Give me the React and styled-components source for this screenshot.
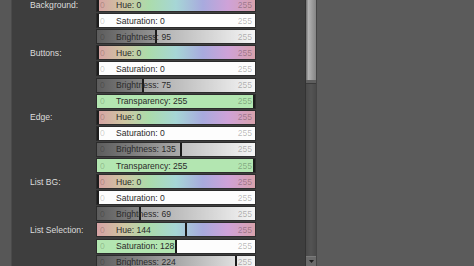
import React from "react";
import styled, { createGlobalStyle } from "styled-components";

const Global = createGlobalStyle`
  html, body {
    margin: 0;
    padding: 0;
    overflow: hidden;
    background: #5b5b5b;
  }
`;

const groups = [
  {
    name: "Background:",
    rows: [
      { kind: "hue", label: "Hue", value: 0 },
      { kind: "fill", label: "Saturation", value: 0 },
      { kind: "bright", label: "Brightness", value: 95, gap: true },
    ],
  },
  {
    name: "Buttons:",
    rows: [
      { kind: "hue", label: "Hue", value: 0 },
      { kind: "fill", label: "Saturation", value: 0 },
      { kind: "bright", label: "Brightness", value: 75 },
      { kind: "fill", label: "Transparency", value: 255 },
    ],
  },
  {
    name: "Edge:",
    rows: [
      { kind: "hue", label: "Hue", value: 0 },
      { kind: "fill", label: "Saturation", value: 0 },
      { kind: "bright", label: "Brightness", value: 135 },
      { kind: "fill", label: "Transparency", value: 255 },
    ],
  },
  {
    name: "List BG:",
    rows: [
      { kind: "hue", label: "Hue", value: 0 },
      { kind: "fill", label: "Saturation", value: 0 },
      { kind: "bright", label: "Brightness", value: 69 },
    ],
  },
  {
    name: "List Selection:",
    rows: [
      { kind: "hue", label: "Hue", value: 144 },
      { kind: "fill", label: "Saturation", value: 128 },
      { kind: "bright", label: "Brightness", value: 224 },
    ],
  },
];

export default function App() {
  return (
    <>
      <Global />
      <Screen>
        <Strip />
        <Panel>
          <List>
            {groups.map((g) =>
              g.rows.map((r, i) => (
                <Row key={g.name + r.label}>
                  <GroupName>{i === 0 ? g.name : ""}</GroupName>
                  <Slider {...r} />
                </Row>
              ))
            )}
          </List>
        </Panel>
        <Scrollbar>
          <Thumb />
          <ThumbCap />
          <Track />
          <ArrowButton>
            <svg width="5" height="3" viewBox="0 0 5 3">
              <path d="M0 0 L5 0 L2.5 3 Z" fill="#1e1e1e" />
            </svg>
          </ArrowButton>
        </Scrollbar>
        <Rest />
      </Screen>
    </>
  );
}

function Slider({ kind, label, value }) {
  const pos = (value / 255) * 100;
  return (
    <Bar kind={kind}>
      {kind === "fill" && <Fill style={{ width: pos + "%" }} />}
      {kind === "bright" && <Shade style={{ left: pos + "%" }} />}
      <Marker style={{ left: `calc(${pos}% - ${value === 255 ? 2 : value === 0 ? 0 : 1}px)` }} />
      <Min>0</Min>
      <Text>
        {label}: {value}
      </Text>
      <Max>255</Max>
    </Bar>
  );
}

const Screen = styled.div`
  display: flex;
  width: 474px;
  height: 266px;
  overflow: hidden;
  font-family: "Liberation Sans", Arial, sans-serif;
`;

const Strip = styled.div`
  width: 11px;
  background: #575757;
  border-right: 1px solid #4a4a4a;
`;

const Panel = styled.div`
  width: 293px;
  background: #3e3e3e;
  overflow: hidden;
`;

const List = styled.div`
  display: flex;
  flex-direction: column;
  gap: 2.1px;
  margin-top: -2.9px;
`;

const Row = styled.div`
  display: grid;
  grid-template-columns: 84px 160px;
  align-items: center;
  height: 14px;
`;

const GroupName = styled.div`
  padding-left: 18px;
  font-size: 8.6px;
  color: #dcdcdc;
  white-space: nowrap;
`;

const hueGradient = `linear-gradient(to right,
  #d6a2a4 0%,
  #cfc6a2 17%,
  #abdcab 33%,
  #a6d6d6 50%,
  #a8aade 67%,
  #cfa2d8 83%,
  #d8a2ac 100%)`;

const Bar = styled.div`
  position: relative;
  box-sizing: border-box;
  height: 15px;
  display: flex;
  align-items: center;
  border: 1px solid #2c2c2c;
  overflow: hidden;
  font-size: 8.6px;
  background: ${(p) =>
    p.kind === "hue"
      ? hueGradient
      : p.kind === "bright"
      ? "linear-gradient(to right, #5c5c5c, #f2f2f2)"
      : "#fdfdfd"};
`;

const Fill = styled.div`
  position: absolute;
  left: 0;
  top: 0;
  bottom: 0;
  background: #b3e6b1;
`;

const Shade = styled.div`
  position: absolute;
  right: 0;
  top: 0;
  bottom: 0;
  background: rgba(255, 255, 255, 0.25);
`;

const Marker = styled.div`
  position: absolute;
  top: 0;
  bottom: 0;
  width: 2px;
  background: #1c1c1c;
`;

const Min = styled.span`
  position: relative;
  width: 19px;
  padding-left: 3px;
  box-sizing: border-box;
  color: rgba(0, 0, 0, 0.2);
`;

const Text = styled.span`
  position: relative;
  flex: 1;
  color: #2a2a2a;
  white-space: nowrap;
`;

const Max = styled.span`
  position: relative;
  padding-right: 3px;
  color: rgba(0, 0, 0, 0.28);
`;

const Scrollbar = styled.div`
  width: 12px;
  display: flex;
  flex-direction: column;
  background: #4c4c4c;
  border-left: 1px solid #333;
  border-right: 1px solid #454545;
  box-sizing: border-box;
`;

const Thumb = styled.div`
  height: 80px;
  background: linear-gradient(to right, #6e6e6e 0%, #b2b2b2 25%, #9c9c9c 60%, #858585 100%);
`;

const ThumbCap = styled.div`
  height: 3px;
  background: #5e5e5e;
  border-bottom: 1px solid #3a3a3a;
`;

const Track = styled.div`
  flex: 1;
  background: linear-gradient(to right, #4a4a4a, #545454, #4a4a4a);
`;

const ArrowButton = styled.div`
  height: 9px;
  display: flex;
  align-items: center;
  justify-content: center;
  background: #6a6a6a;
  border-top: 1px solid #7a7a7a;
`;

const Rest = styled.div`
  flex: 1;
  background: #5b5b5b;
`;
